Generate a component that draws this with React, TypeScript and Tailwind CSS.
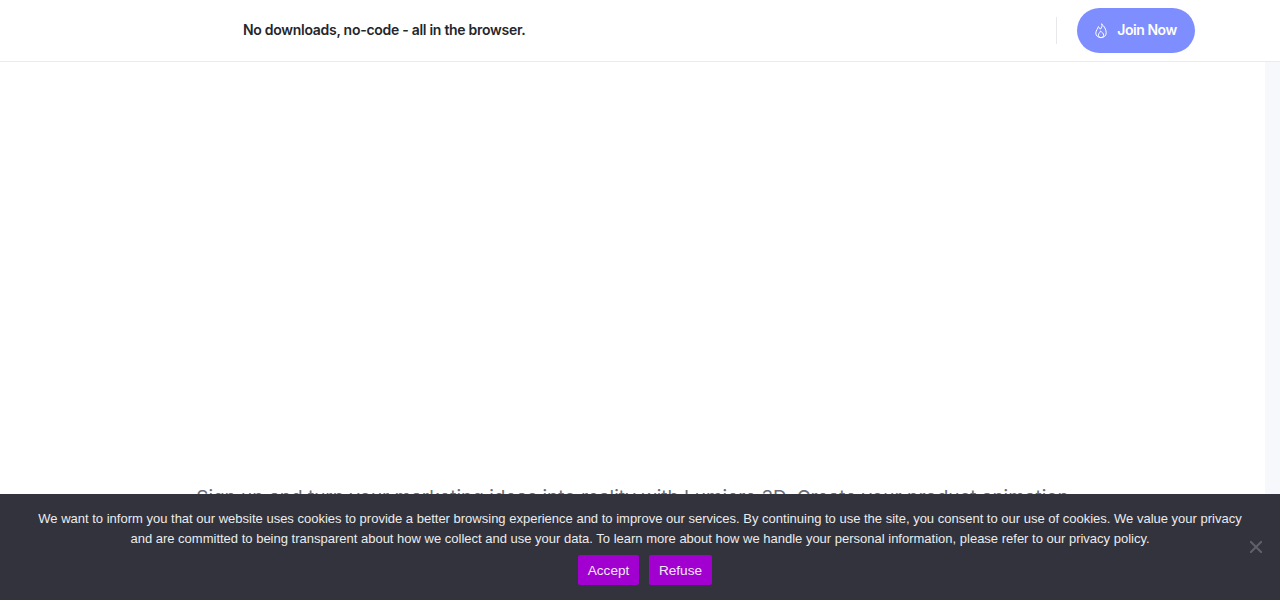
import React from "react";

function Flame() {
  return (
    <svg width="16" height="16" viewBox="0 0 16 16" fill="none" stroke="currentColor" strokeWidth="1" strokeLinecap="round" strokeLinejoin="round">
      <path d="M8.800 1.200C9.600 3.400 8.600 4.800 7.300 6.200 6.900 5.200 6.300 4.300 5.300 3.600 5.300 5.400 2.800 7.200 2.800 10.100c0 2.700 2.300 4.500 5.200 4.500s5.200-1.800 5.200-4.700c0-3.300-1.800-6.800-4.400-8.700Z" />
      <path d="M8 14.600c-1.500 0-2.700-1-2.700-2.400 0-1.700 1.700-2.400 2.200-4.100 1.400 1 3.200 2.300 3.200 4.100 0 1.400-1.200 2.400-2.700 2.400Z" />
    </svg>
  );
}

export default function App() {
  return (
    <div className="relative h-screen overflow-hidden bg-white font-['Inter',sans-serif]">
      <header className="flex h-[62px] items-center border-b border-[#e9ebee] bg-white pl-[243px] pr-[85px]">
        <p className="mb-[2px] flex-1 text-[14px] font-semibold tracking-[-0.28px] text-[#25262b]">
          No downloads, no-code - all in the browser.
        </p>
        <div className="mr-5 h-[27px] w-px bg-[#e6e8ee]" />
        <a className="flex h-[45px] w-[118px] items-center justify-center gap-2 rounded-full bg-[#7f8eff] pr-[2px] text-[14px] font-semibold tracking-[-0.45px] text-white">
          <Flame />
          <span className="mb-[2px]">Join Now</span>
        </a>
      </header>
      <div className="flex h-[538px]">
        <main className="flex-1 pt-[422px] text-center">
          <p className="text-[19px] leading-7 tracking-[-0.03px] text-[#6b6e78]">
            Sign up and turn your marketing ideas into reality with Lumiere 3D. Create your product animation
          </p>
        </main>
        <div className="w-[15px] bg-[#f7f8fb]" />
      </div>
      <div className="absolute inset-x-0 bottom-0 flex h-[106px] flex-col items-center bg-[#32333c] px-[38px] pt-[15px] font-['Liberation_Sans',sans-serif] text-[13px] text-[#ececee]">
        <p className="text-center leading-5">
          We want to inform you that our website uses cookies to provide a better browsing experience and to improve our services. By continuing to use the site, you consent to our use of cookies. We value your privacy and are committed to being transparent about how we collect and use your data. To learn more about how we handle your personal information, please refer to our privacy policy.
        </p>
        <div className="ml-[10px] mt-[6px] flex gap-[10px]">
          <button className="h-[30px] w-[61px] rounded-[2px] bg-[#a100d1] pt-[2px] text-[13.6px]">Accept</button>
          <button className="h-[30px] w-[63px] rounded-[2px] bg-[#a100d1] pt-[2px] text-[13.6px]">Refuse</button>
        </div>
        <svg className="absolute left-[1250px] top-[47px]" width="12" height="12" viewBox="0 0 12 12" stroke="#5f6068" strokeWidth="2">
          <path d="M0 0 12 12M12 0 0 12" />
        </svg>
      </div>
    </div>
  );
}
